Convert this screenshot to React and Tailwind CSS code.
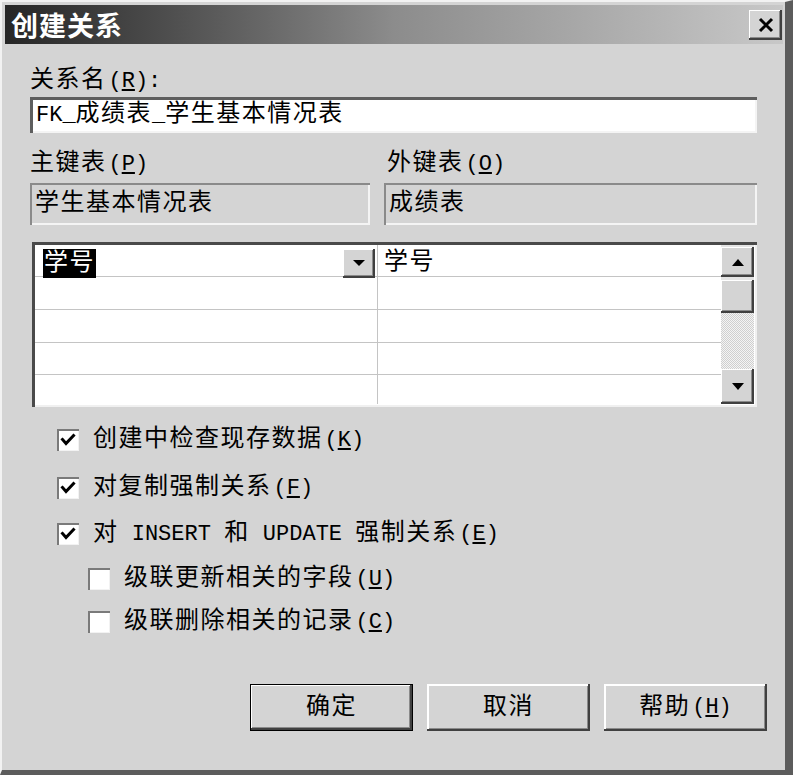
import React from 'react';

const font = "font-['Liberation_Mono','Noto_Sans_CJK_SC',monospace]";

// Latin runs a little smaller, CJK runs slightly spaced, like the bitmap font
function Txt({ s }) {
  const parts = s.split(/([\x00-\x7F]+)/).filter(Boolean);
  return (
    <>
      {parts.map((p, i) =>
        /^[\x00-\x7F]+$/.test(p) ? (
          <span key={i} className="text-[22px] whitespace-pre">{p}</span>
        ) : (
          <span key={i} className="tracking-[1.5px]">{p}</span>
        )
      )}
    </>
  );
}

function Acc({ c }) {
  return (
    <span className="ml-[2px] text-[22px]">
      (<span className="underline underline-offset-2">{c}</span>)
    </span>
  );
}

function Check({ checked }) {
  return (
    <div className="w-[22px] h-[22px] bg-white shadow-[inset_2px_2px_0_#7a7a7a,inset_-1px_-1px_0_#f2f2f2] flex items-center justify-center shrink-0">
      {checked && (
        <svg width="16" height="16" viewBox="0 0 16 16">
          <path d="M2.5 7.5 L6 11.5 L13.5 3.5" fill="none" stroke="#000" strokeWidth="3" strokeLinecap="square" />
        </svg>
      )}
    </div>
  );
}

function Arrow({ up }) {
  return (
    <svg width="14" height="8" viewBox="0 0 14 8">
      <path d={up ? 'M1 8 L7 1 L13 8 Z' : 'M1 0 L7 7 L13 0 Z'} fill="#000" />
    </svg>
  );
}

function Btn({ children, main }) {
  return (
    <div className={`w-[163px] h-[47px] shrink-0 flex items-center justify-center text-[24px] text-black ${main ? 'border border-black shadow-[inset_-2px_-2px_0_#404040,inset_1px_1px_0_#ffffff,inset_-3px_-3px_0_#8a8a8a]' : 'shadow-[inset_-2px_-2px_0_#404040,inset_2px_2px_0_#ffffff,inset_-3px_-3px_0_#8a8a8a]'}`}>
      {children}
    </div>
  );
}

export default function App() {
  const options = [
    { text: '创建中检查现存数据', key: 'K', checked: true, sub: false, h: 'h-[48px]' },
    { text: '对复制强制关系', key: 'F', checked: true, sub: false, h: 'h-[47px]' },
    { text: '对 INSERT 和 UPDATE 强制关系', key: 'E', checked: true, sub: false, h: 'h-[46px]' },
    { text: '级联更新相关的字段', key: 'U', checked: false, sub: true, h: 'h-[43px]' },
    { text: '级联删除相关的记录', key: 'C', checked: false, sub: true, h: 'h-[44px]' },
  ];

  return (
    <div className={`w-[793px] h-[775px] bg-[#d4d4d4] border-t-2 border-l-2 border-t-[#f2f2f2] border-l-[#f2f2f2] border-r-[8px] border-b-[5px] border-r-[#5c5c5c] border-b-[#5c5c5c] flex flex-col overflow-hidden text-black ${font}`}>
      {/* Title bar */}
      <div className="mt-[3px] ml-[3px] mr-[2px] h-[39px] bg-gradient-to-r from-[#262626] via-[#8c8c8c] to-[#c8c8c8] flex items-center justify-between pl-[6px] pr-[1px]">
        <span className="text-white font-bold text-[27px] leading-none tracking-[1px] font-['Noto_Sans_CJK_SC',sans-serif]">创建关系</span>
        <div className="w-[33px] h-[30px] bg-[#d4d4d4] shadow-[inset_-2px_-2px_0_#404040,inset_1px_1px_0_#ffffff,inset_-3px_-3px_0_#8a8a8a] flex items-center justify-center">
          <svg width="18" height="16" viewBox="0 0 18 16">
            <path d="M3 2 L15 14 M15 2 L3 14" stroke="#000" strokeWidth="3" />
          </svg>
        </div>
      </div>

      <div className="px-[28px] flex flex-col">
        <div className="mt-[23px] h-[28px] leading-[28px] text-[24px]">
          <Txt s="关系名" /><Acc c="R" /><span className="text-[22px]">:</span>
        </div>
        <div className="mt-[2px] h-[36px] bg-white shadow-[inset_3px_3px_0_#5e5e5e,inset_-2px_-2px_0_#f4f4f4] flex items-center pl-[6px] text-[24px]">
          <Txt s="FK_成绩表_学生基本情况表" />
        </div>

        <div className="mt-[17px] grid grid-cols-[340px_1fr] gap-x-[14px]">
          <div className="h-[28px] leading-[28px] text-[24px]">
            <Txt s="主键表" /><Acc c="P" />
          </div>
          <div className="h-[28px] leading-[28px] text-[24px] pl-[3px]">
            <Txt s="外键表" /><Acc c="O" />
          </div>
          <div className="mt-[5px] h-[42px] shadow-[inset_2px_2px_0_#8a8a8a,inset_-2px_-2px_0_#f4f4f4] flex items-center pl-[5px] text-[24px]">
            <Txt s="学生基本情况表" />
          </div>
          <div className="mt-[5px] h-[42px] shadow-[inset_2px_2px_0_#8a8a8a,inset_-2px_-2px_0_#f4f4f4] flex items-center pl-[5px] text-[24px]">
            <Txt s="成绩表" />
          </div>
        </div>

        {/* Grid */}
        <div className="mt-[17px] ml-[2px] h-[165px] bg-white shadow-[inset_3px_3px_0_#4a4a4a,inset_-2px_-2px_0_#f0f0f0] p-[3px] flex">
          <div className="flex-1 flex flex-col">
            <div className="h-[32px] grid grid-cols-[343px_1fr] border-b border-[#c4c4c4]">
              <div className="border-r border-[#c4c4c4] flex items-center pl-[8px] pr-[2px]">
                <span className="bg-black text-white text-[24px] h-[29px] leading-[29px] px-[1px]"><Txt s="学号" /></span>
                <div className="ml-auto w-[32px] h-[29px] bg-[#d4d4d4] shadow-[inset_-2px_-2px_0_#404040,inset_1px_1px_0_#ffffff,inset_-3px_-3px_0_#8a8a8a] flex items-center justify-center">
                  <svg width="12" height="7" viewBox="0 0 12 7"><path d="M0 0 L6 6 L12 0 Z" fill="#000" /></svg>
                </div>
              </div>
              <div className="flex items-center pl-[6px] text-[24px]"><Txt s="学号" /></div>
            </div>
            {['h-[33px]', 'h-[33px]', 'h-[32px]', 'flex-1'].map((h, i) => (
              <div key={i} className={`${h} grid grid-cols-[343px_1fr] ${i < 3 ? 'border-b border-[#c4c4c4]' : ''}`}>
                <div className="border-r border-[#c4c4c4]" />
                <div />
              </div>
            ))}
          </div>
          {/* Scrollbar */}
          <div className="w-[33px] flex flex-col bg-[#e4e4e4]">
            <div className="h-[30px] mt-[2px] bg-[#d4d4d4] shadow-[inset_-2px_-2px_0_#404040,inset_1px_1px_0_#ffffff,inset_-3px_-3px_0_#8a8a8a] flex items-center justify-center">
              <Arrow up />
            </div>
            <div className="h-[33px] mt-[3px] bg-[#d4d4d4] shadow-[inset_-2px_-2px_0_#404040,inset_1px_1px_0_#ffffff,inset_-3px_-3px_0_#8a8a8a]" />
            <div className="flex-1 bg-[repeating-conic-gradient(#f4f4f4_0%_25%,#cfcfcf_0%_50%)] bg-size-[2px_2px]" />
            <div className="h-[35px] bg-[#d4d4d4] shadow-[inset_-2px_-2px_0_#404040,inset_1px_1px_0_#ffffff,inset_-3px_-3px_0_#8a8a8a] flex items-center justify-center">
              <Arrow />
            </div>
          </div>
        </div>

        {/* Options */}
        <div className="mt-[9px] flex flex-col">
          {options.map((o) => (
            <div key={o.key} className={`${o.h} flex items-center ${o.sub ? 'pl-[58px]' : 'pl-[27px]'}`}>
              <Check checked={o.checked} />
              <span className="ml-[14px] text-[24px]">
                <Txt s={o.text} />
                <Acc c={o.key} />
              </span>
            </div>
          ))}
        </div>

        {/* Buttons */}
        <div className="mt-[40px] ml-[220px] flex gap-[14px]">
          <Btn main><Txt s="确定" /></Btn>
          <Btn><Txt s="取消" /></Btn>
          <Btn>
            <Txt s="帮助" /><Acc c="H" />
          </Btn>
        </div>
      </div>
    </div>
  );
}
